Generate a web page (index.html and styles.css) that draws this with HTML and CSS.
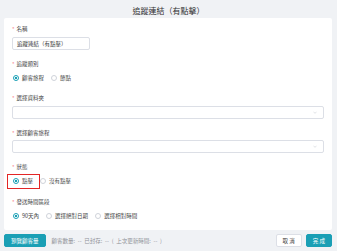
FILE: index.html
```html
<!DOCTYPE html>
<html lang="zh-Hant">
<head>
    <meta charset="UTF-8">
    <meta name="viewport" content="width=device-width, initial-scale=1.0">
    <title>追蹤連結（有點擊）</title>
    <link rel="stylesheet" href="styles.css">
</head>
<body>
    <div class="header">追蹤連結（有點擊）</div>
    <div class="card">
        <div class="form-item">
            <div class="label">名稱</div>
            <div class="input">追蹤連結（有點擊）</div>
        </div>
        <div class="form-item">
            <div class="label">追蹤類別</div>
            <div class="radio-group">
                <label class="radio checked"><span class="dot"></span>顧客旅程</label>
                <label class="radio"><span class="dot"></span>節點</label>
            </div>
        </div>
        <div class="form-item">
            <div class="label">選擇資料夾</div>
            <div class="select">
                <svg class="chevron" viewBox="0 0 10 6"><path d="M1 1 L5 5 L9 1" fill="none" stroke="#b4b8bf" stroke-width="1"/></svg>
            </div>
        </div>
        <div class="form-item">
            <div class="label">選擇顧客旅程</div>
            <div class="select">
                <svg class="chevron" viewBox="0 0 10 6"><path d="M1 1 L5 5 L9 1" fill="none" stroke="#b4b8bf" stroke-width="1"/></svg>
            </div>
        </div>
        <div class="form-item">
            <div class="label">狀態</div>
            <div class="radio-group">
                <label class="radio checked"><span class="dot"></span>點擊<span class="mark"></span></label>
                <label class="radio"><span class="dot"></span>沒有點擊</label>
            </div>
        </div>
        <div class="form-item">
            <div class="label">發送時間區段</div>
            <div class="radio-group">
                <label class="radio checked"><span class="dot"></span>90天內</label>
                <label class="radio"><span class="dot"></span>選擇絕對日期</label>
                <label class="radio"><span class="dot"></span>選擇相對時間</label>
            </div>
        </div>
    </div>
    <div class="footer">
        <button class="btn primary">預覽顧客量</button>
        <span class="info">顧客數量: -- 已封存: -- ( 上次更新時間: -- )</span>
        <span class="spacer"></span>
        <button class="btn">取 消</button>
        <button class="btn primary">完 成</button>
    </div>
</body>
</html>
```

FILE: styles.css
```css
body {
    margin: 0;
    background-color: #f0f2f5;
    font-family: "Noto Sans CJK TC", "Noto Sans", sans-serif;
    color: #333;
    font-size: 5.5px;
}
.header {
    padding: 7px 0 3px;
    font-size: 8px;
    line-height: 8px;
    text-align: center;
    color: #303133;
}
.card {
    margin: 0 5px 0 4px;
    background-color: white;
    border-radius: 2px;
    padding: 7px 8px 8px;
}
.form-item {
    margin-bottom: 10px;
}
.form-item:last-child {
    margin-bottom: 0;
}
.label {
    height: 8px;
    line-height: 8px;
    margin-bottom: 3.5px;
    color: #444;
}
.label::before {
    content: "*";
    color: #f56c6c;
    margin-right: 2px;
}
.input {
    width: 78px;
    height: 13px;
    line-height: 13px;
    box-sizing: border-box;
    border: 0.5px solid #dcdfe6;
    border-radius: 2px;
    padding: 0 4px;
    color: #333;
}
.select {
    height: 13px;
    box-sizing: border-box;
    border: 0.5px solid #dcdfe6;
    border-radius: 2px;
    display: flex;
    align-items: center;
    justify-content: flex-end;
    padding-right: 6px;
}
.chevron {
    width: 4px;
    height: 3px;
}
.radio-group {
    height: 13px;
    display: flex;
    align-items: center;
    gap: 7px;
    padding-left: 1px;
}
.radio {
    display: flex;
    align-items: center;
    gap: 3px;
    color: #444;
    position: relative;
    line-height: 8px;
}
.dot {
    width: 6px;
    height: 6px;
    box-sizing: border-box;
    border: 0.5px solid #cfd3da;
    border-radius: 50%;
    background: white;
}
.radio.checked .dot {
    border: 0.8px solid #1a9fb5;
    background: radial-gradient(circle, #1a9fb5 0 1.2px, white 1.5px);
}
.mark {
    position: absolute;
    left: -6px;
    right: -7px;
    top: -3.5px;
    bottom: -3.5px;
    border: 1.5px solid #e32626;
}
.footer {
    display: flex;
    align-items: center;
    padding: 4px 5px 4px 4px;
}
.btn {
    height: 13px;
    padding: 0 6px;
    font-family: inherit;
    font-size: 5.5px;
    border: 0.5px solid #dcdfe6;
    border-radius: 2px;
    background: white;
    color: #444;
    margin-left: 4px;
}
.btn:first-child {
    margin-left: 0;
}
.btn.primary {
    background-color: #1a9fb5;
    border-color: #1a9fb5;
    color: white;
}
.info {
    margin-left: 6px;
    color: #909399;
    word-spacing: 1.5px;
}
.spacer {
    flex: 1;
}
```
